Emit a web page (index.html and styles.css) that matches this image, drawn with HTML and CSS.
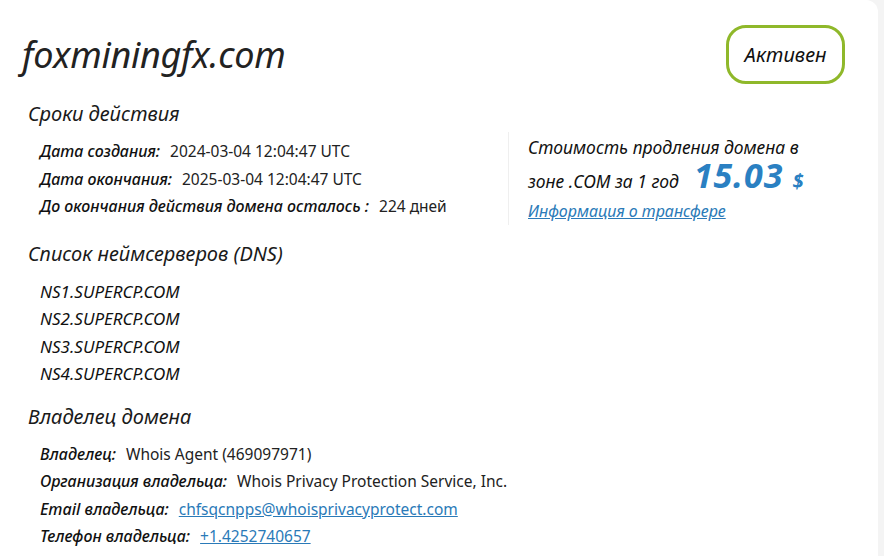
FILE: index.html
```html
<!DOCTYPE html>
<html lang="ru">
<head>
<meta charset="utf-8">
<link rel="stylesheet" href="styles.css">
</head>
<body>
<div class="card">
  <header class="head">
    <h1 class="domain">foxminingfx.com</h1>
    <div class="badge">Активен</div>
  </header>
  <div class="main">
    <div class="left">
      <h2 class="sec">Сроки действия</h2>
      <div class="rows first">
        <div class="row"><span class="lbl">Дата создания:</span><span class="val">2024-03-04 12:04:47 UTC</span></div>
        <div class="row"><span class="lbl">Дата окончания:</span><span class="val">2025-03-04 12:04:47 UTC</span></div>
        <div class="row"><span class="lbl">До окончания действия домена осталось :</span><span class="val">224 дней</span></div>
      </div>
    </div>
    <div class="right">
      <p class="price-text">Стоимость продления домена в зоне .COM за 1 год<span class="price">15.03</span><span class="cur">$</span></p>
      <a class="transfer" href="#">Информация о трансфере</a>
    </div>
  </div>
  <h2 class="sec">Список неймсерверов (DNS)</h2>
  <div class="rows">
    <div class="row ns">NS1.SUPERCP.COM</div>
    <div class="row ns">NS2.SUPERCP.COM</div>
    <div class="row ns">NS3.SUPERCP.COM</div>
    <div class="row ns">NS4.SUPERCP.COM</div>
  </div>
  <h2 class="sec">Владелец домена</h2>
  <div class="rows">
    <div class="row"><span class="lbl">Владелец:</span><span class="val">Whois Agent (469097971)</span></div>
    <div class="row"><span class="lbl">Организация владельца:</span><span class="val">Whois Privacy Protection Service, Inc.</span></div>
    <div class="row"><span class="lbl">Email владельца:</span><a class="val link" href="#">chfsqcnpps@whoisprivacyprotect.com</a></div>
    <div class="row"><span class="lbl">Телефон владельца:</span><a class="val link" href="#">+1.4252740657</a></div>
  </div>
</div>
</body>
</html>
```

FILE: styles.css
```css
html, body {
  margin: 0;
  padding: 0;
}
body {
  background: #f4f4f4;
  font-family: "Noto Sans", "Open Sans", sans-serif;
  color: #1a1a1a;
  overflow: hidden;
  height: 556px;
}
.card {
  width: 878px;
  height: 556px;
  box-sizing: border-box;
  background: #fff;
  border-top-right-radius: 12px;
  padding: 25px 0 0 22px;
}
.head {
  display: flex;
  justify-content: space-between;
  align-items: center;
  padding-right: 33px;
}
.domain {
  margin: 0;
  font-family: "Noto Sans", sans-serif;
  font-style: italic;
  font-weight: 400;
  font-size: 36px;
  letter-spacing: -0.3px;
  color: #222;
}
.badge {
  width: 113px;
  height: 53px;
  border: 3px solid #8fb82a;
  border-radius: 20px;
  display: flex;
  align-items: center;
  justify-content: center;
  font-style: italic;
  font-size: 20px;
  color: #111;
}
.main {
  display: flex;
  margin-top: 16px;
  align-items: flex-start;
}
.left {
  width: 486px;
}
.right {
  margin-top: 32px;
  height: 93px;
  border-left: 1px solid #efefef;
  padding-left: 19px;
  width: 300px;
}
.sec {
  margin: 0 0 0 6px;
  font-style: italic;
  font-weight: 400;
  font-size: 20px;
  line-height: 28px;
  color: #1a1a1a;
}
.rows {
  display: flex;
  flex-direction: column;
  padding: 10px 0 15px 18px;
}
.rows.first {
  padding-bottom: 19px;
}
.row {
  height: 27.5px;
  line-height: 27.5px;
  display: flex;
  gap: 10px;
  font-size: 16px;
}
.lbl {
  font-style: italic;
  font-weight: 500;
  color: #111;
}
.val {
  color: #222;
  font-size: 15.5px;
}
.ns {
  font-style: italic;
  font-size: 17px;
  color: #111;
}
.link {
  color: #2a7ab8;
  text-decoration: underline;
}
.price-text {
  margin: 0;
  font-style: italic;
  font-size: 17.5px;
  line-height: 30px;
  color: #111;
}
.price {
  display: inline-block;
  margin-left: 15px;
  font-size: 34px;
  font-weight: 700;
  color: #2a80c2;
  letter-spacing: 1px;
  line-height: 26px;
  height: 26px;
}
.cur {
  display: inline-block;
  margin-left: 9px;
  font-size: 20px;
  font-weight: 700;
  color: #2a80c2;
  line-height: 20px;
}
.transfer {
  display: block;
  font-style: italic;
  font-size: 16px;
  line-height: 30px;
  color: #2a7ab8;
  text-decoration: underline;
}
```
